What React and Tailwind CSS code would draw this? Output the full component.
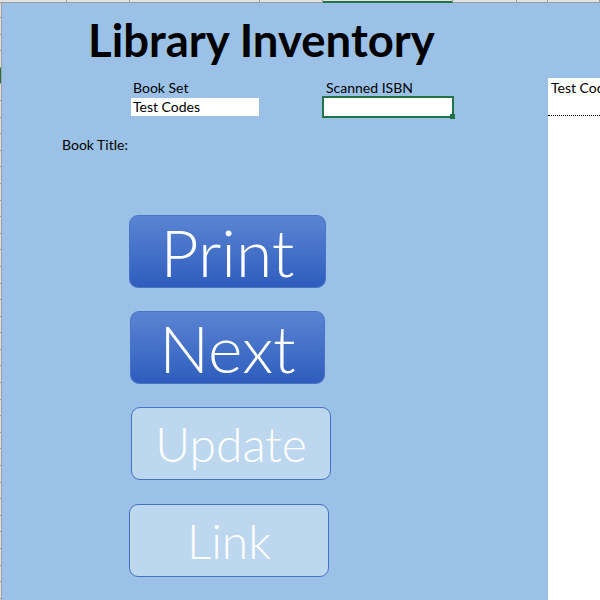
import React from 'react';

// Excel-like sheet with a "Library Inventory" form

const headerCols = [
  { w: 'w-[67px]' },
  { w: 'w-[63px]' },
  { w: 'w-[130px]' },
  { w: 'w-[63px]' },
  { w: 'w-[130px]', active: true },
  { w: 'w-[64px]' },
  { w: 'w-[31px]' },
  { w: 'w-[52px]' },
];

const rows = Array.from({ length: 36 }, (_, i) => i);

function SheetButton({ label, dark, className }) {
  const look = dark
    ? 'bg-gradient-to-b from-[#5b84d3] to-[#2e5dbd] border-[#4a74c6] text-[66px]'
    : 'bg-[#bdd7ee] border-[#4472c4] text-[48px]';
  return (
    <button
      className={`${className} ${look} h-[73px] rounded-[9px] border flex items-center justify-center text-white font-light leading-none`}
    >
      {label}
    </button>
  );
}

export default function App() {
  return (
    <div className="w-[600px] h-[600px] overflow-hidden flex flex-col bg-[#9bc2e6] text-black font-['Lato','Open_Sans',sans-serif]">
      {/* Column header strip */}
      <div className="flex h-[3px] shrink-0 bg-[#e1e1e1]">
        {headerCols.map((c, i) => (
          <div
            key={i}
            className={`${c.w} shrink-0 border-r border-[#9e9e9e] ${
              c.active ? 'border-b-2 border-b-[#217346]' : 'border-b border-b-[#9e9e9e]'
            }`}
          />
        ))}
      </div>

      <div className="flex flex-1 min-h-0">
        {/* Row header strip */}
        <div className="w-[2px] shrink-0 flex flex-col bg-[#e1e1e1] border-r border-[#9e9e9e]">
          {rows.map((r) => (
            <div
              key={r}
              className={`${r === 0 ? 'h-[15px]' : 'h-[16.6px]'} shrink-0 border-b border-[#9e9e9e] ${
                r === 4 ? 'bg-[#217346]' : ''
              }`}
            />
          ))}
        </div>

        {/* Form area */}
        <div className="w-[546px] shrink-0 flex flex-col">
          <h1 className="mt-[11px] pl-[86px] text-[45.5px] leading-[52px] font-bold">Library Inventory</h1>

          <div className="mt-[14px] pl-[129px] flex items-start text-[14px]">
            <div className="w-[128px]">
              <div className="h-[16px] leading-[16px] pl-[2px]">Book Set</div>
              <div className="mt-[2px] h-[18px] leading-[18px] bg-white pl-[2px]">Test Codes</div>
            </div>
            <div className="ml-[63px] w-[132px]">
              <div className="h-[16px] leading-[16px] pl-[4px]">Scanned ISBN</div>
              <div className="relative h-[22px] bg-white border-2 border-[#217346]">
                <div className="absolute -right-[3px] -bottom-[3px] w-[5px] h-[5px] bg-[#217346]" />
              </div>
            </div>
          </div>

          <div className="mt-[19px] pl-[60px] text-[14px] leading-[16px]">Book Title:</div>

          <div className="mt-[62px] flex flex-col items-start">
            <SheetButton label="Print" dark className="ml-[127px] w-[197px]" />
            <SheetButton label="Next" dark className="mt-[23px] ml-[128px] w-[195px]" />
            <SheetButton label="Update" className="mt-[23px] ml-[129px] w-[200px]" />
            <SheetButton label="Link" className="mt-[24px] ml-[127px] w-[200px]" />
          </div>
        </div>

        {/* Side panel */}
        <div className="w-[52px] shrink-0 flex flex-col">
          <div className="h-[75px] shrink-0" />
          <div className="flex-1 bg-white overflow-hidden">
            <div className="h-[38px] pt-[2px] pl-[3px] border-b border-dotted border-black text-[14px] leading-[16px] whitespace-nowrap">
              Test Codes
            </div>
          </div>
        </div>
      </div>
    </div>
  );
}
